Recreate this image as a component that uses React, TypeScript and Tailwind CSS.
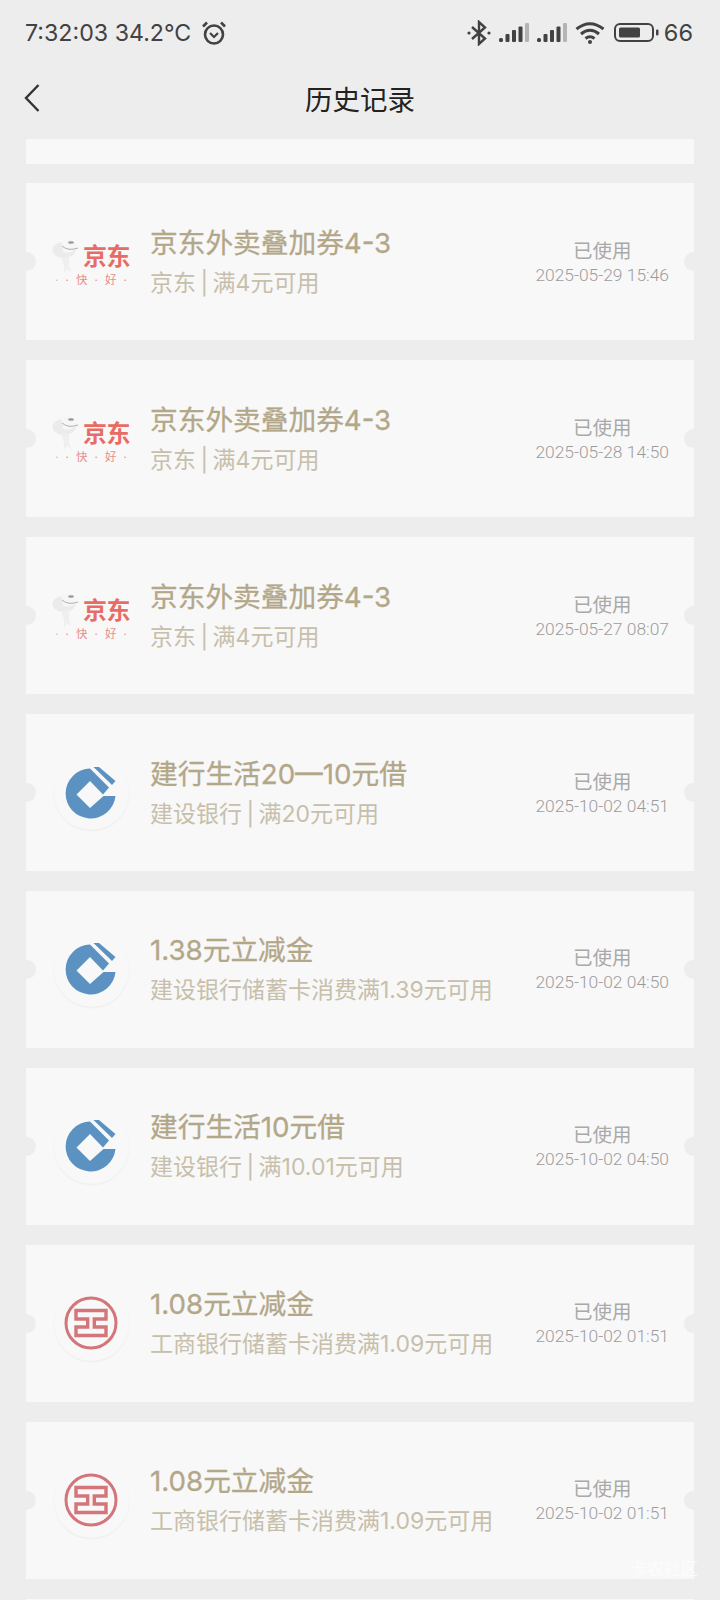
const FONT = "font-['Inter','Noto_Sans_CJK_SC',sans-serif]";

function JdLogo() {
  return (
    <div className="flex w-[78px] flex-col items-center">
      <div className="flex h-[38px] w-[78px] items-end">
        <svg width="31" height="38" viewBox="0 0 31 38" className="shrink-0">
          <ellipse cx="12" cy="14" rx="11.500" ry="8" fill="#ebebeb" />
          <path d="M9 5 Q18 1 26 8 Q23 19 11 16 Z" fill="#f6f6f6" />
          <ellipse cx="19" cy="6.500" rx="3" ry="1.300" fill="#9a9a9a" />
          <path d="M10 10 Q16 15.500 26 12" stroke="#b0b0b0" strokeWidth="1" fill="none" />
          <path d="M9 21 L17 20 L17 30 L19 36 L15 33 L12 37 L12 30 Z" fill="#efefef" />
        </svg>
        <span className="mb-[4px] text-[24px] leading-[26px] font-bold tracking-[-0.5px] whitespace-nowrap text-[#e86c66]">京东</span>
      </div>
      <div className="mt-[-1px] flex w-[72px] items-center justify-between text-[11.500px] leading-[14px] text-[#e88f8b]">
        <span className="text-[#c4c4c4]">·</span>
        <span>·</span>
        <span>快</span>
        <span>·</span>
        <span>好</span>
        <span>·</span>
      </div>
    </div>
  );
}

function CcbLogo() {
  return (
    <svg width="52" height="52" viewBox="0 0 52 52">
      <path
        fill="#5b92c1"
        fillRule="evenodd"
        d="M25 1.500 A25 25 0 1 0 50.500 29 L38.500 29 L25 41 L11.500 27.500 L25 14 L38 27.500 L44 20.500 Z"
      />
      <path fill="#5b92c1" d="M28.500 0 L34 0 L50.500 14 L47 18 Z" />
    </svg>
  );
}

function IcbcLogo() {
  return (
    <svg width="54" height="54" viewBox="0 0 54 54">
      <circle cx="27" cy="27" r="25" fill="none" stroke="#d4757a" strokeWidth="3" />
      <path
        fill="none"
        stroke="#d4757a"
        strokeWidth="3.400"
        d="M12 14.500 H42 V23 H30.300 V31 H42 V39.500 H12 V31 H23.700 V23 H12 Z"
      />
    </svg>
  );
}

type Coupon = { logo: "jd" | "ccb" | "icbc"; title: string; sub: string; date: string };

const coupons: Coupon[] = [
  { logo: "jd", title: "京东外卖叠加券4-3", sub: "京东 | 满4元可用", date: "2025-05-29 15:46" },
  { logo: "jd", title: "京东外卖叠加券4-3", sub: "京东 | 满4元可用", date: "2025-05-28 14:50" },
  { logo: "jd", title: "京东外卖叠加券4-3", sub: "京东 | 满4元可用", date: "2025-05-27 08:07" },
  { logo: "ccb", title: "建行生活20—10元借", sub: "建设银行 | 满20元可用", date: "2025-10-02 04:51" },
  { logo: "ccb", title: "1.38元立减金", sub: "建设银行储蓄卡消费满1.39元可用", date: "2025-10-02 04:50" },
  { logo: "ccb", title: "建行生活10元借", sub: "建设银行 | 满10.01元可用", date: "2025-10-02 04:50" },
  { logo: "icbc", title: "1.08元立减金", sub: "工商银行储蓄卡消费满1.09元可用", date: "2025-10-02 01:51" },
  { logo: "icbc", title: "1.08元立减金", sub: "工商银行储蓄卡消费满1.09元可用", date: "2025-10-02 01:51" },
];

function Card({ c }: { c: Coupon }) {
  return (
    <div className="relative flex h-[157px] shrink-0 items-center bg-[#f8f8f8]">
      <div className="absolute left-[-9px] top-[69px] h-[19px] w-[19px] rounded-full bg-[#ededed]" />
      <div className="absolute right-[-9px] top-[69px] h-[19px] w-[19px] rounded-full bg-[#ededed]" />
      <div className="ml-[27px] flex w-[76px] shrink-0 justify-center">
        {c.logo === "jd" ? (
          <JdLogo />
        ) : (
          <div className="flex h-[75px] w-[75px] items-center justify-center rounded-full bg-[#f8f8f8] shadow-[0_1px_2px_rgba(0,0,0,0.05)]">
            {c.logo === "ccb" ? <CcbLogo /> : <IcbcLogo />}
          </div>
        )}
      </div>
      <div className="ml-[21px] flex min-w-0 flex-1 flex-col gap-[11px] pt-[1px]">
        <div className="text-[27.700px] leading-[30px] whitespace-nowrap text-[#b3a789] [-webkit-text-stroke:0.3px_#b3a789]">{c.title}</div>
        <div className="text-[23px] leading-[28px] whitespace-nowrap text-[#c7bfab] [word-spacing:-2px]">{c.sub}</div>
      </div>
      <div className="mr-[25px] flex shrink-0 flex-col items-center pt-[1px]">
        <div className="text-[19.500px] leading-[25px] text-[#a9a9a9]">已使用</div>
        <div className="font-['Roboto','Noto_Sans_CJK_SC',sans-serif] text-[17.400px] leading-[22px] font-light whitespace-nowrap text-[#9c9c9c]">{c.date}</div>
      </div>
    </div>
  );
}

function Signal() {
  return (
    <svg width="30" height="20" viewBox="0 0 30 20" className="ml-[8px]">
      <rect x="0" y="15" width="4" height="4" rx="1.500" fill="#424242" />
      <rect x="6.500" y="11" width="4" height="8" rx="1" fill="#424242" />
      <rect x="13" y="7" width="4" height="12" rx="1" fill="#424242" />
      <rect x="19.500" y="3.500" width="4" height="15.500" rx="1" fill="#424242" />
      <rect x="26" y="0" width="4" height="19" rx="1" fill="#b4b4b4" />
    </svg>
  );
}

function StatusBar() {
  return (
    <div className="flex h-[66px] items-center justify-between pl-[25px] pr-[27px] text-[#424242]">
      <div className="flex items-center">
        <span className="text-[23.200px] leading-[30px] whitespace-nowrap">7:32:03 34.2°C</span>
        <svg width="26" height="26" viewBox="0 0 26 26" className="ml-[10px]" fill="none" stroke="#424242">
          <circle cx="13" cy="14.500" r="9" strokeWidth="2.600" />
          <path d="M9 13 L13 17 L17 13" strokeWidth="2.200" />
          <path d="M2 6.500 L6 2.500 M24 6.500 L20 2.500" strokeWidth="2.600" />
        </svg>
      </div>
      <div className="flex items-center">
        <svg width="24" height="26" viewBox="0 0 24 26" fill="none" stroke="#424242" strokeWidth="2.400">
          <path d="M5 7 L18 18.500 L12 24 V2 L18 7.500 L5 19" />
          <circle cx="2" cy="13" r="1.600" fill="#424242" stroke="none" />
          <circle cx="22" cy="13" r="1.600" fill="#424242" stroke="none" />
        </svg>
        <Signal />
        <Signal />
        <svg width="30" height="24" viewBox="0 0 30 24" className="ml-[8px]" fill="none" stroke="#424242" strokeWidth="3">
          <path d="M1.500 8 Q15 -2.500 28.500 8" />
          <path d="M6 13 Q15 5.500 24 13" />
          <path d="M10.500 17.500 Q15 14 19.500 17.500" />
          <circle cx="15" cy="21" r="2" fill="#424242" stroke="none" />
        </svg>
        <svg width="45" height="20" viewBox="0 0 45 20" className="ml-[9px]">
          <rect x="1" y="1" width="38" height="17" rx="5" fill="none" stroke="#424242" strokeWidth="2" />
          <rect x="5" y="4.500" width="21" height="10" rx="1.500" fill="#424242" />
          <rect x="42" y="6.500" width="2.500" height="6" rx="1" fill="#424242" />
        </svg>
        <span className="ml-[5px] text-[23.500px] leading-[30px]">66</span>
      </div>
    </div>
  );
}

export default function App() {
  return (
    <div className={`relative h-[1600px] w-[720px] overflow-hidden bg-[#ededed] ${FONT}`}>
      <StatusBar />
      <div className="relative flex h-[73px] items-center justify-center pb-[6px]">
        <svg width="18" height="30" viewBox="0 0 18 30" className="absolute left-[23px] top-[17px]" fill="none" stroke="#333333" strokeWidth="2.400">
          <path d="M15.500 2 L3 15 L15.500 28" />
        </svg>
        <span className="text-[27.500px] leading-[36px] text-[#222222]">历史记录</span>
      </div>
      <div className="flex flex-col gap-[19.900px] pl-[26px] pr-[26px]">
        <div className="h-[24.500px] shrink-0 bg-[#f8f8f8]" />
        {coupons.map((c, i) => (
          <Card key={i} c={c} />
        ))}
        <div className="h-[20px] shrink-0 bg-[#f8f8f8]" />
      </div>
      <div className="absolute left-[630px] top-[1558px] text-[17px] leading-[22px] whitespace-nowrap text-white/70">卡农社区</div>
    </div>
  );
}
